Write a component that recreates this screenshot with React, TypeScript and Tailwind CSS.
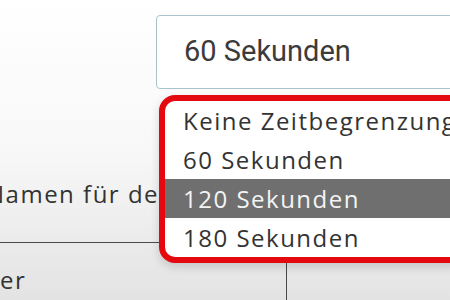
const options = ['Keine Zeitbegrenzung', '60 Sekunden', '120 Sekunden', '180 Sekunden']

export default function App() {
  const selected = '120 Sekunden'

  return (
    <div
      className="relative h-[300px] w-[450px] overflow-hidden bg-gradient-to-b from-white via-[#f8f8f8] to-[#e3e3e3] text-[#333]"
      style={{ fontFamily: '"Open Sans", "Noto Sans", sans-serif' }}
    >
      <div className="pl-[156px] pt-[15px]">
        <div
          className="flex h-[74px] w-[320px] items-center rounded-[4px] border border-[#a9c3cc] bg-white pl-[27px] text-[29px] text-[#3b3b3b]"
          style={{ fontFamily: 'Roboto, sans-serif' }}
        >
          60 Sekunden
        </div>
      </div>

      <p className="ml-[-14px] mt-[88px] whitespace-nowrap text-[24px] leading-[33px] tracking-[1.5px]">
        Namen für de
      </p>

      <div className="mt-[32px] flex border-t border-[#4a4a4a]">
        <div className="h-[80px] w-[287px] border-r border-[#4a4a4a] pt-[20px] text-[24px] leading-[33px] tracking-[1.5px]">
          er
        </div>
      </div>

      <ul className="absolute left-[159px] top-[95px] w-[320px] overflow-hidden rounded-[16px] border-[6px] border-[#e4080f] bg-white shadow-[0_4px_10px_rgba(0,0,0,0.15)]">
        {options.map((opt) => (
          <li
            key={opt}
            className={
              opt === selected
                ? 'h-[39px] whitespace-nowrap bg-[#6f6f6f] pl-[18px] text-[24px] leading-[39px] tracking-[1.5px] text-[#f4f4f4]'
                : 'h-[39px] whitespace-nowrap pl-[18px] text-[24px] leading-[39px] tracking-[1.5px] text-[#333]'
            }
          >
            {opt}
          </li>
        ))}
      </ul>
    </div>
  )
}
